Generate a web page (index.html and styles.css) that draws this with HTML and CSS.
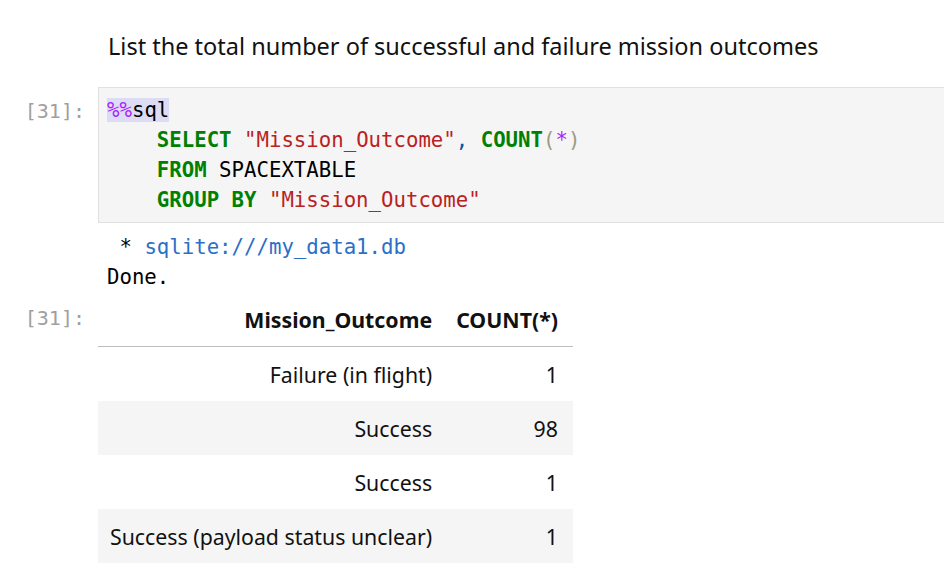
FILE: index.html
```html
<!DOCTYPE html>
<html>
<head>
<meta charset="utf-8">
<link rel="stylesheet" href="styles.css">
</head>
<body>
<div class="notebook">
  <div class="md-cell">
    <p class="md-text">List the total number of successful and failure mission outcomes</p>
  </div>

  <div class="row input-row">
    <div class="prompt">[31]:</div>
    <div class="code-box">
<pre class="code"><span class="magic"><span class="op">%%</span>sql</span>
    <span class="kw">SELECT</span> <span class="str">"Mission_Outcome"</span><span class="punc">,</span> <span class="kw">COUNT</span><span class="paren">(</span><span class="op">*</span><span class="paren">)</span>
    <span class="kw">FROM</span> SPACEXTABLE
    <span class="kw">GROUP BY</span> <span class="str">"Mission_Outcome"</span></pre>
    </div>
  </div>

  <div class="row stream-row">
    <div class="prompt"></div>
<pre class="stream"> * <span class="link">sqlite:///my_data1.db</span>
Done.</pre>
  </div>

  <div class="row result-row">
    <div class="prompt out-prompt">[31]:</div>
    <table class="result">
      <thead>
        <tr><th>Mission_Outcome</th><th class="num">COUNT(*)</th></tr>
      </thead>
      <tbody>
        <tr><td>Failure (in flight)</td><td class="num">1</td></tr>
        <tr><td>Success</td><td class="num">98</td></tr>
        <tr><td>Success</td><td class="num">1</td></tr>
        <tr><td>Success (payload status unclear)</td><td class="num">1</td></tr>
      </tbody>
    </table>
  </div>
</div>
</body>
</html>
```

FILE: styles.css
```css
html, body {
  margin: 0;
  padding: 0;
  background: #ffffff;
  overflow: hidden;
}

.notebook {
  width: 980px;
  font-family: "Noto Sans", "Open Sans", sans-serif;
  color: #111111;
}

.md-cell {
  padding: 29px 0 0 108px;
  height: 87px;
  box-sizing: border-box;
}

.md-text {
  margin: 0;
  font-size: 23.5px;
  line-height: 34px;
  color: #111111;
}

.row {
  display: flex;
  align-items: flex-start;
}

.prompt {
  width: 98px;
  flex: 0 0 98px;
  box-sizing: border-box;
  padding-right: 13px;
  text-align: right;
  font-family: "DejaVu Sans Mono", monospace;
  font-size: 20px;
  line-height: 30px;
  color: #a0a0a0;
}

.input-row .prompt {
  padding-top: 9px;
}

.code-box {
  flex: 1 1 auto;
  background: #f5f5f5;
  border: 1px solid #e0e0e0;
  padding: 7px 0 7px 8px;
  height: 136px;
  box-sizing: border-box;
}

.code, .stream {
  margin: 0;
  font-family: "DejaVu Sans Mono", monospace;
  font-size: 20.7px;
  line-height: 30px;
  color: #000000;
}

.magic {
  background: #dcdcf4;
}

.kw {
  color: #008000;
  font-weight: bold;
}

.str {
  color: #ba2121;
}

.punc {
  color: #0055aa;
}

.paren {
  color: #a09a80;
}

.op {
  color: #aa22ff;
}

.stream-row {
  padding-top: 9px;
}

.stream {
  padding-left: 9px;
}

.link {
  color: #2a6fc9;
}

.out-prompt {
  padding-top: 11px;
}

.result {
  border-collapse: collapse;
  font-size: 21.3px;
  color: #111111;
}

.result th, .result td {
  text-align: right;
  padding: 0 12px;
  height: 54px;
  vertical-align: middle;
}

.result .num {
  padding-left: 12px;
  padding-right: 15px;
}

.result th {
  font-weight: bold;
  border-bottom: 1px solid #bdbdbd;
}

.result tbody tr:nth-child(even) {
  background: #f5f5f5;
}
```
